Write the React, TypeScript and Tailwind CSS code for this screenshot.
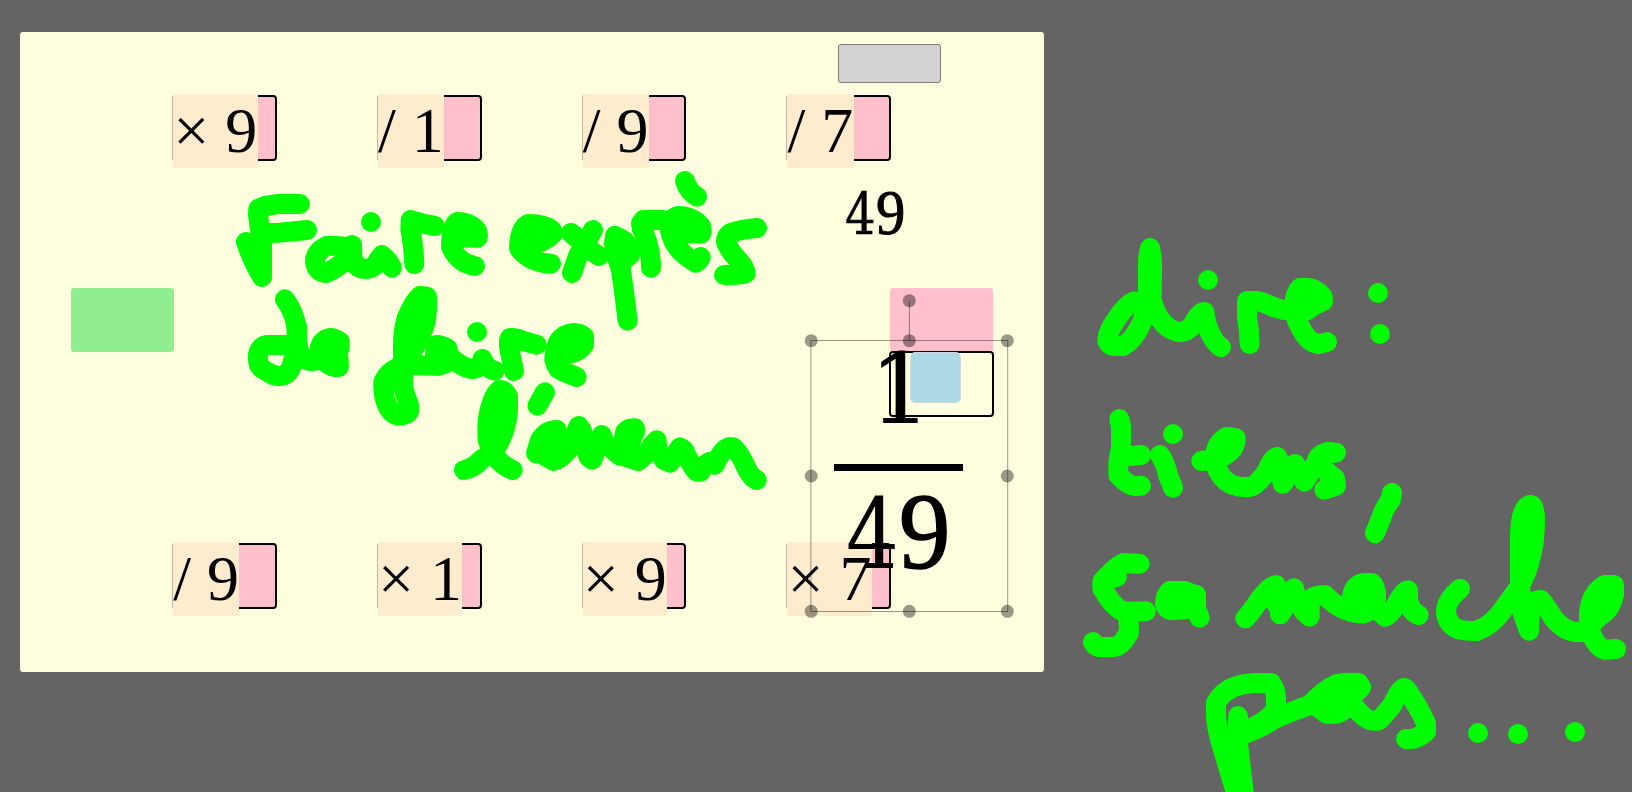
import React from "react";

function OperationCard({ label, cell }: { label: string; cell: string }) {
  return (
    <div className={`relative ${cell}`}>
      <div className="absolute -inset-px rounded-[4px] border-2 border-black bg-[#ffc0cb]" />
      <div className="absolute -left-[1.4px] top-0 h-full w-px bg-[#bdb9a6]" />
      <div className="absolute -left-[0.4px] -top-[2px] h-[74px] whitespace-pre rounded-tl-[3px] bg-[#ffebcd] pr-[0.4px] font-['Liberation_Serif',serif] text-[64px] leading-[74px] text-black">
        {label}
      </div>
    </div>
  );
}

function LargeFraction() {
  return (
    <div className="absolute left-[834px] top-[339.6px] flex w-[129px] flex-col items-center text-black">
      <span className="pl-[4px] font-['DejaVu_Serif',serif] text-[98px] leading-none">1</span>
      <span className="mt-[26.7px] h-[7px] w-full bg-black" />
      <span className="mt-[8px] flex items-baseline pl-[1px] leading-none">
        <span className="w-[53.5px] origin-left scale-x-[0.85] font-['DejaVu_Serif',serif] text-[98px]">4</span>
        <span className="origin-left scale-x-[0.96] font-['Liberation_Serif',serif] text-[107px] [-webkit-text-stroke:1.5px_#000]">9</span>
      </span>
    </div>
  );
}

function SmallValue() {
  return (
    <div className="absolute left-[844.6px] top-[182.4px] flex items-baseline leading-none text-black">
      <span className="w-[31px] origin-left scale-x-[0.83] font-['DejaVu_Serif',serif] text-[58px] [-webkit-text-stroke:0.4px_#000]">4</span>
      <span className="origin-left scale-x-[0.93] font-['Liberation_Serif',serif] text-[63px] [-webkit-text-stroke:1px_#000]">9</span>
    </div>
  );
}

type Layer = { x: number; y: number; strokes: string[]; dots?: [number, number][] };

// Pen strokes are recorded at three times the board's scale.
const layers: Layer[] = [
  {
    x: 220,
    y: 160,
    strokes: [
      "M240 132L175 132L135 138L115 146L114 165Q117 190 122 220L126 350Q100 310 78 246",
      "M126 219L180 218L261 210",
      "M126 250L126 350",
      "M390 262Q345 256 320 258Q285 275 285 305Q290 338 318 339Q345 328 368 308Q385 290 396 255L397 290Q405 325 437 327Q465 325 475 300L486 285Q505 300 516 323",
      "M645 198Q610 193 572 180L571 210Q580 250 583 312",
      "M700 215L725 232L773 233Q776 215 765 205Q745 186 712 186Q694 196 693 260Q715 310 765 318",
      "M720 210L755 215",
      "M195 418Q222 455 229 500L231 560Q228 580 218 605Q210 645 180 648Q160 648 145 637Q115 625 114 600L114 585Q120 555 145 555L231 555",
      "M231 500L232 550Q240 602 275 603Q320 600 345 585L359 565L359 545Q345 534 330 534Q305 540 300 562L302 590Q325 620 345 621L357 620L355 590",
      "M585 560Q612 510 618 480L621 450L621 410L600 408Q580 425 560 475Q549 510 549 555L549 680Q555 705 567 735L567 755Q560 766 535 767Q510 762 497 725Q489 700 490 665Q505 635 530 625L560 602L585 560",
      "M595 430L590 480L570 540",
      "M560 615L655 617Q680 612 690 600L682 565Q665 555 650 555Q645 570 644 590",
      "M690 590Q730 627 762 627Q785 620 787 597Q797 625 824 632",
    ],
    dots: [[453, 186], [771, 516]],
  },
  {
    x: 480,
    y: 160,
    strokes: [
      "M170 554L130 543Q110 533 90 534L87 540L87 560Q95 600 102 633",
      "M245 575Q285 590 312 554L312 530Q300 519 280 519Q250 522 235 545Q222 570 223 600Q230 628 245 632L290 651",
      "M260 560L290 545",
      "M122 262Q190 252 218 222L215 210Q195 192 145 192Q118 205 117 265Q150 308 213 311",
      "M273 219Q300 240 330 270L357 288",
      "M339 210L320 245L295 285L276 339",
      "M405 228L402 250L410 290L423 330L434 410L443 482",
      "M405 228Q435 240 450 260L450 285L425 305",
      "M550 180L490 180L483 190L485 205Q513 260 513 323",
      "M590 200L620 218L664 221Q668 200 655 190Q630 168 595 168Q570 175 570 210Q580 270 648 308Q660 300 662 291",
      "M615 63Q625 95 651 110",
      "M831 204Q780 208 750 220Q736 230 739 250Q750 275 775 300Q797 325 797 340Q780 345 732 345",
    ],
  },
  {
    x: 360,
    y: 360,
    strokes: [
      "M312 330Q340 325 365 298L400 275Q440 220 444 150L444 110Q435 90 418 90Q403 98 392 140Q382 170 382 210L383 240Q405 310 458 330",
      "M415 120L410 240",
      "M555 97L532 137",
      "M528 280L540 240Q560 210 590 210L600 240L590 290L580 302L545 282L580 260",
      "M580 302Q600 300 625 270L656 198L665 210L685 290L697 299L725 225L735 250L780 287L796 215Q805 204 825 205L825 215L805 260L780 285L835 303Q865 280 876 255L890 241L892 270L912 300L930 308L960 262L972 270Q1000 330 1010 335L1022 335Q1035 310 1050 306L1065 314Q1085 270 1105 262L1120 262Q1140 280 1155 315Q1170 350 1190 360",
    ],
  },
  {
    x: 1080,
    y: 220,
    strokes: [
      "M210 85Q203 110 204 150L204 225",
      "M210 85Q217 110 216 150L215 230",
      "M204 244L160 245Q135 255 100 312Q82 340 82 362Q88 377 105 378L130 378Q160 360 182 315Q200 275 205 225",
      "M213 235Q240 330 300 336Q330 334 345 302Q360 276 373 276Q376 310 393 345Q410 375 423 381",
      "M612 270Q590 266 560 252Q540 243 525 243L501 243L501 290Q508 330 509 372",
      "M612 270L680 272Q700 255 729 243L728 230Q705 204 685 204L660 204Q643 220 643 260Q643 290 660 320Q685 372 720 372L741 366",
      "M118 597L123 620L123 680L115 730L115 765Q145 798 165 798L183 797",
      "M123 708L150 708L183 705",
      "M240 705Q257 730 264 765L279 803",
      "M364 723L420 715L450 695Q467 680 467 655Q455 651 440 651Q405 670 404 720Q410 760 440 785Q465 801 490 801L510 801Q530 797 560 755Q575 715 592 711L600 740L608 791L645 732L673 785L711 725",
      "M768 698L745 696Q712 705 711 725L745 760L765 775L768 797L750 803L733 809",
      "M936 819L933 838Q910 870 905 890L885 940",
    ],
    dots: [[384, 180], [894, 219], [900, 342], [279, 642]],
  },
  {
    x: 1070,
    y: 480,
    strokes: [
      "M209 251L160 249Q135 262 110 290L97 305L97 325Q135 390 165 395L228 394",
      "M110 300L141 290",
      "M175 395L177 458L160 484Q145 500 130 501L85 501Q72 496 69 486",
      "M300 333L345 333Q370 345 378 345L378 385L389 413",
      "M300 333Q285 345 285 372Q290 390 305 390L345 388L378 345",
      "M305 362L350 362",
      "M526 415Q545 395 570 357Q600 316 618 316L628 350L630 403Q650 380 652 345L672 325Q680 360 700 392L719 410L719 380Q712 350 750 346L765 346Q810 395 870 400",
      "M600 345L625 380",
      "M675 345L700 375",
      "M845 355Q850 315 880 309L905 309Q918 320 918 350L905 390L880 401L850 375L880 345",
      "M918 350L915 380L945 410Q960 405 978 375Q1000 332 1014 331Q1010 390 1046 405",
      "M530 990L497 936L455 795Q438 740 438 700L438 668Q470 612 555 609L603 609Q618 630 618 655L618 690Q585 730 504 762",
      "M504 708L504 790L522 945",
      "M500 780L510 936",
      "M504 768Q560 750 600 725Q620 710 720 675Q760 630 800 612Q830 607 865 609L873 622L850 645L835 680Q810 701 800 701L770 701L735 675L800 655L850 645",
    ],
  },
  {
    x: 1350,
    y: 480,
    strokes: [
      "M330 326L310 345Q288 370 288 395Q290 432 325 448Q345 453 380 453Q430 435 465 380L505 325Q555 240 555 120Q555 75 540 75Q520 80 513 125L510 160L510 320L518 400L537 452L540 380",
      "M533 90L530 270",
      "M537 375Q555 360 572 360Q590 380 610 415Q645 456 680 456L700 456",
      "M717 450L717 400Q722 340 765 315L792 315L792 345Q780 390 760 400Q730 420 717 448Q740 505 765 509L798 507",
      "M765 340L745 390",
      "M-5 655Q40 722 70 722L85 722Q95 715 127 675Q150 624 164 624Q172 627 180 645Q205 680 228 730L228 755Q205 775 185 777L168 777",
    ],
    dots: [[384, 759], [504, 762], [675, 756]],
  },
];

function Ink() {
  return (
    <svg className="pointer-events-none absolute inset-0" width="1632" height="792" viewBox="0 0 1632 792" aria-hidden="true">
      {layers.map((layer, i) => (
        <g
          key={i}
          transform={`translate(${layer.x} ${layer.y}) scale(${1 / 3})`}
          fill="none"
          stroke="#00ff00"
          strokeWidth={60}
          strokeLinecap="round"
          strokeLinejoin="round"
        >
          {layer.strokes.map((d, j) => (
            <path key={j} d={d} />
          ))}
          {(layer.dots ?? []).map(([cx, cy], j) => (
            <circle key={j} cx={cx} cy={cy} r={30} fill="#00ff00" stroke="none" />
          ))}
        </g>
      ))}
    </svg>
  );
}

const handles: [number, number][] = [
  [811.2, 340.7], [909.3, 340.7], [1007.3, 340.7],
  [811.2, 476], [1007.3, 476],
  [811.2, 611.3], [909.3, 611.3], [1007.3, 611.3],
  [909.3, 300.7],
];

function SelectionFrame() {
  return (
    <svg className="absolute inset-0" width="1632" height="792" viewBox="0 0 1632 792" aria-hidden="true">
      <g fill="none" stroke="#000" strokeOpacity="0.4">
        <rect x="810.9" y="340.5" width="196.8" height="271" />
        <path d="M909.4 340.5V300.5" />
      </g>
      <g fill="#000" fillOpacity="0.4">
        {handles.map(([cx, cy]) => (
          <circle key={`${cx}-${cy}`} cx={cx} cy={cy} r="6.5" />
        ))}
      </g>
    </svg>
  );
}

export default function App() {
  return (
    <main className="relative h-[792px] w-[1632px] overflow-hidden bg-[#646464] pl-[20px] pt-[32px]">
      <section className="grid h-[640px] w-[1024px] grid-cols-[repeat(20,51.2px)] grid-rows-[repeat(10,64px)] rounded-[3px] bg-[#ffffe0]">
        <div className="col-span-2 col-start-17 row-start-1 -ml-px -mt-[2px] h-[39px] w-[103px] self-center rounded-[3px] border border-[#7d7d78] bg-[#d3d3d3]" />

        <OperationCard label="× 9" cell="col-start-4 col-span-2 row-start-2" />
        <OperationCard label="/ 1" cell="col-start-8 col-span-2 row-start-2" />
        <OperationCard label="/ 9" cell="col-start-12 col-span-2 row-start-2" />
        <OperationCard label="/ 7" cell="col-start-16 col-span-2 row-start-2" />

        <div className="col-span-2 col-start-2 row-start-5 rounded-[3px] bg-[#90ee90]" />
        <div className="col-span-2 col-start-18 row-start-5 rounded-[3px] bg-[#ffc0cb]" />
        <div className="col-span-2 col-start-18 row-start-6 -m-px rounded-[4px] border-2 border-black pl-[19px]">
          <div className="-mt-px h-[51px] w-[51px] rounded-[5px] border border-[#cfd8e2] bg-[#add8e6]" />
        </div>

        <OperationCard label="/ 9" cell="col-start-4 col-span-2 row-start-9" />
        <OperationCard label="× 1" cell="col-start-8 col-span-2 row-start-9" />
        <OperationCard label="× 9" cell="col-start-12 col-span-2 row-start-9" />
        <OperationCard label="× 7" cell="col-start-16 col-span-2 row-start-9" />
      </section>

      <SmallValue />
      <LargeFraction />
      <SelectionFrame />
      <Ink />
    </main>
  );
}
